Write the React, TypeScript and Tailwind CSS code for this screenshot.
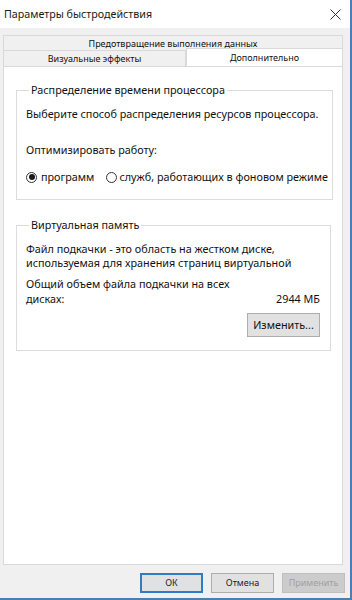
import React from "react";

const font = { fontFamily: '"Noto Sans", "Open Sans", Arial, sans-serif' };

function Radio({ checked }: { checked?: boolean }) {
  return (
    <span className="w-[11px] h-[11px] rounded-full border border-[#333333] bg-white flex items-center justify-center shrink-0">
      {checked ? <span className="w-[6px] h-[6px] rounded-full bg-[#1a1a1a]" /> : null}
    </span>
  );
}

function Btn({ children, primary, disabled, className }: { children: React.ReactNode; primary?: boolean; disabled?: boolean; className?: string }) {
  return (
    <div
      className={
        "h-[20px] flex items-center justify-center text-[9px] " +
        (disabled
          ? "bg-[#cccccc] border border-[#bfbfbf] text-[#a0a0a0] "
          : primary
          ? "bg-[#e1e1e1] border-2 border-[#2f7bc4] text-[#1a1a1a] "
          : "bg-[#e1e1e1] border border-[#adadad] text-[#1a1a1a] ") +
        (className || "")
      }
    >
      {children}
    </div>
  );
}

export default function App() {
  return (
    <div className="w-[352px] h-[600px] bg-[#f0f0f0] flex flex-col border-r-2 border-b-2 border-[#4d7fae] text-[#111111]" style={font}>
      {/* Title bar */}
      <div className="h-[28px] bg-white flex items-center justify-between pl-[4px] pr-[9px] shrink-0">
        <span className="text-[10.7px] text-[#1a1a1a]">Параметры быстродействия</span>
        <svg width="11" height="11" viewBox="0 0 11 11">
          <path d="M0.5 0.5 L10.5 10.5 M10.5 0.5 L0.5 10.5" stroke="#333" strokeWidth="1" fill="none" />
        </svg>
      </div>

      <div className="flex flex-col pl-[3px] pr-[7px] pt-[7px]">
        {/* Tabs row 1 */}
        <div className="h-[16px] border border-b-0 border-[#d9d9d9] bg-[#f0f0f0] flex items-center justify-center text-[9px]">
          Предотвращение выполнения данных
        </div>
        {/* Tabs row 2 */}
        <div className="h-[15px] flex items-end">
          <div className="w-[183px] h-[16px] border border-b-0 border-[#d9d9d9] bg-[#f0f0f0] flex items-center justify-center text-[9px]">
            Визуальные эффекты
          </div>
          <div className="flex-1 h-[18px] -mt-[2px] border border-b-0 border-[#d9d9d9] bg-white flex items-start justify-center pt-[2px] text-[9px] relative z-10">
            Дополнительно
          </div>
        </div>

        {/* Panel */}
        <div className="h-[499px] bg-white border border-[#d9d9d9] pl-[12px] pr-[11px] pt-[16px] flex flex-col gap-[18px]">
          <fieldset className="border border-[#dcdcdc] pl-[9px] pr-[4px] pb-[10px] h-[117px]">
            <legend className="text-[10.8px] px-[2px] ml-[3px] leading-[14px]">Распределение времени процессора</legend>
            <div className="text-[10.8px] leading-[16px] mt-[9px]">Выберите способ распределения ресурсов процессора.</div>
            <div className="text-[10.8px] leading-[16px] mt-[20px]">Оптимизировать работу:</div>
            <div className="flex items-center mt-[11px] text-[10.8px] leading-[16px]">
              <Radio checked />
              <span className="ml-[4px]">программ</span>
              <span className="ml-[12px]"><Radio /></span>
              <span className="ml-[2px] whitespace-nowrap">служб, работающих в фоновом режиме</span>
            </div>
          </fieldset>

          <fieldset className="border border-[#dcdcdc] pl-[9px] pr-[10px] h-[133px]">
            <legend className="text-[10.8px] px-[2px] ml-[3px] leading-[14px]">Виртуальная память</legend>
            <div className="text-[10.8px] leading-[14px] mt-[10px]">
              <div className="whitespace-nowrap">Файл подкачки - это область на жестком диске,</div>
              <div className="whitespace-nowrap">используемая для хранения страниц виртуальной</div>
            </div>
            <div className="text-[10.8px] leading-[15px] mt-[6px]">
              <div>Общий объем файла подкачки на всех</div>
              <div className="flex justify-between">
                <span>дисках:</span>
                <span>2944 МБ</span>
              </div>
            </div>
            <div className="flex justify-end mt-[7px]">
              <div className="w-[73px] h-[24px] bg-[#e1e1e1] border border-[#adadad] flex items-center justify-center text-[10.8px]">Изменить...</div>
            </div>
          </fieldset>
        </div>

        {/* Bottom buttons */}
        <div className="flex justify-end gap-[8px] mt-[8px] -mr-[2px]">
          <Btn primary className="w-[63px]">ОК</Btn>
          <Btn className="w-[63px]">Отмена</Btn>
          <Btn disabled className="w-[63px]">Применить</Btn>
        </div>
      </div>
    </div>
  );
}
